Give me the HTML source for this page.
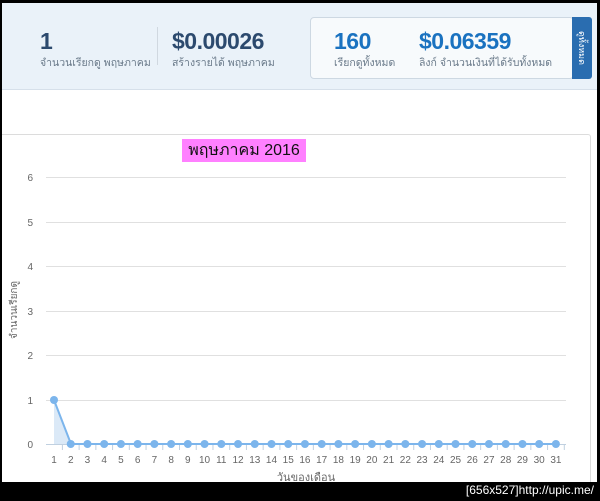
<!DOCTYPE html><html><head><meta charset="utf-8"><style>
body{margin:0;width:600px;height:501px;background:#000;position:relative;overflow:hidden;font-family:"Liberation Sans","Noto Sans CJK SC",sans-serif}
.pg{position:absolute;left:2px;top:3px;width:595px;height:479px;background:#fff;overflow:hidden}
.hd{position:absolute;left:0;top:0;width:595px;height:86px;background:#eaf2f9;border-bottom:1px solid #d6e0ea}
.n{position:absolute;font-weight:bold;font-size:23px;color:#2c4a6e;letter-spacing:-0.5px}
.l{position:absolute;font-size:10.5px;color:#6a7a8a}
.box{position:absolute;left:308px;top:14px;width:262px;height:60px;background:#f7fafc;border:1px solid #cdd8e2;border-radius:4px}
.tab{position:absolute;left:570px;top:14px;width:20px;height:62px;background:#2a6db0;border-radius:0 3px 3px 0}
.panel{position:absolute;left:-4px;top:131px;width:591px;height:360px;border:1px solid #dcdcdc;border-radius:3px}
</style></head><body><div class="pg">
<div class="hd">
<div class="n" style="left:38px;top:25px">1</div>
<div class="l" style="left:38px;top:51px">จำนวนเรียกดู พฤษภาคม</div>
<div style="position:absolute;left:155px;top:24px;width:1px;height:38px;background:#d0d8e0"></div>
<div class="n" style="left:170px;top:25px">$0.00026</div>
<div class="l" style="left:170px;top:51px">สร้างรายได้ พฤษภาคม</div>
<div class="box"></div>
<div class="n" style="left:332px;top:25px;color:#1a72c0">160</div>
<div class="l" style="left:332px;top:51px">เรียกดูทั้งหมด</div>
<div class="n" style="left:417px;top:25px;color:#1a72c0">$0.06359</div>
<div class="l" style="left:417px;top:51px">ลิงก์ จำนวนเงินที่ได้รับทั้งหมด</div>
<div class="tab"></div>
<div style="position:absolute;left:555px;top:38px;width:50px;font-size:9px;color:#fff;transform:rotate(90deg);text-align:center">ดูทั้งหมด</div>
</div>
<div class="panel"></div>
<div style="position:absolute;left:180px;top:136px;width:124px;height:23px;background:#ff80ff;font-size:16px;line-height:23px;text-align:center;color:#111">พฤษภาคม 2016</div>
<svg style="position:absolute;left:-2px;top:-3px" width="600" height="485" font-family="Liberation Sans,sans-serif" font-size="10" fill="#666">
<g stroke="#e0e0e0" stroke-width="1">
<line x1="46" x2="566" y1="177.5" y2="177.5"/><line x1="46" x2="566" y1="222.5" y2="222.5"/><line x1="46" x2="566" y1="266.5" y2="266.5"/><line x1="46" x2="566" y1="311.5" y2="311.5"/><line x1="46" x2="566" y1="355.5" y2="355.5"/><line x1="46" x2="566" y1="400.5" y2="400.5"/></g>
<line x1="46" x2="566" y1="444.5" y2="444.5" stroke="#c0d0e0"/>
<g text-anchor="end"><text x="33" y="181">6</text><text x="33" y="226">5</text><text x="33" y="270">4</text><text x="33" y="315">3</text><text x="33" y="359">2</text><text x="33" y="404">1</text><text x="33" y="448">0</text></g>
<text transform="translate(17,310) rotate(-90)" text-anchor="middle" font-size="10">จำนวนเรียกดู</text>
<polygon points="54,400 71,444 54,444" fill="#dbe9f7"/>
<g id="x"></g>
<polyline fill="none" stroke="#7cb5ec" stroke-width="2" points="54,400 71,444 556,444"/>
<g fill="#7cb5ec">
<circle cx="54" cy="400" r="4"/>
</g>
<g fill="#7cb5ec" id="pts"></g>
<g text-anchor="middle" id="lbl"></g>
<text x="306" y="481" text-anchor="middle" font-size="11">วันของเดือน</text>
</svg>
<script>
var p=document.getElementById('pts'),l=document.getElementById('lbl'),x=document.getElementById('x'),s='';var t='',u='';
for(var i=1;i<=31;i++){var cx=54+(i-1)*16.73;if(i>1)s+='<circle cx="'+cx+'" cy="444" r="4"/>';t+='<text x="'+cx+'" y="463">'+i+'</text>';u+='<line x1="'+(cx+8.4)+'" x2="'+(cx+8.4)+'" y1="444" y2="450" stroke="#c0d0e0"/>';}
p.innerHTML=s;l.innerHTML=t;x.innerHTML=u;
</script>
</div>
<div style="position:absolute;right:6px;top:483px;color:#fff;font-family:'Liberation Sans',sans-serif;font-size:12px">[656x527]http://upic.me/</div>
</body></html>
